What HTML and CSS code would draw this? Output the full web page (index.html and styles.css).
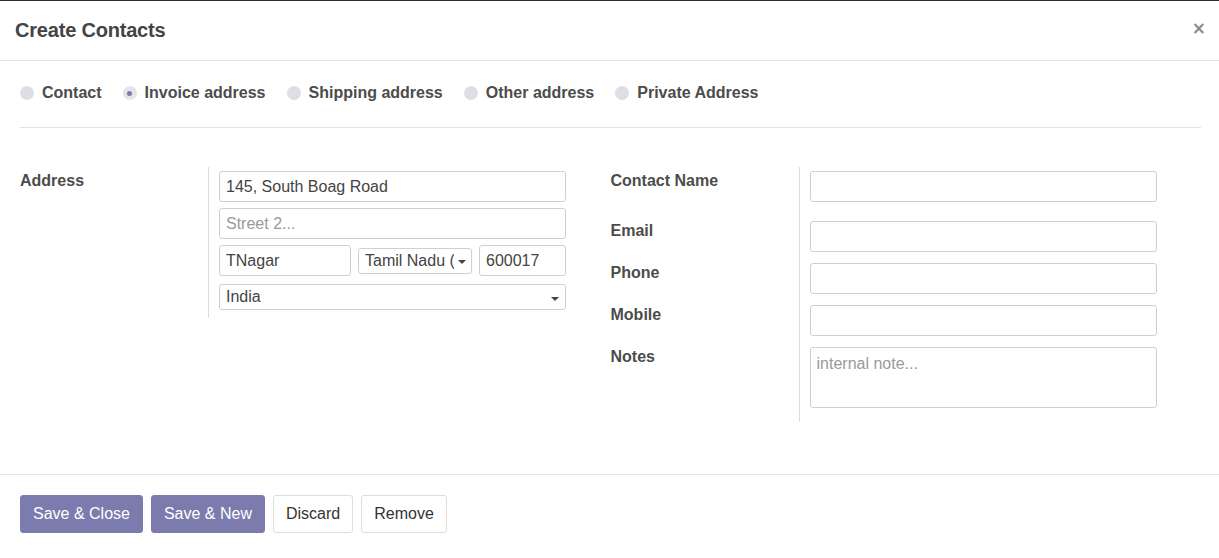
FILE: index.html
```html
<!DOCTYPE html>
<html>
<head>
<meta charset="utf-8">
<title>Create Contacts</title>
<link rel="stylesheet" href="styles.css">
</head>
<body>
<div class="modal">
  <header class="modal-header">
    <h4 class="modal-title">Create Contacts</h4>
    <button class="close" type="button">×</button>
  </header>
  <main class="modal-body">
    <div class="radio-row">
      <label class="radio"><span class="dot"></span><span>Contact</span></label>
      <label class="radio"><span class="dot checked"></span><span>Invoice address</span></label>
      <label class="radio"><span class="dot"></span><span>Shipping address</span></label>
      <label class="radio"><span class="dot"></span><span>Other address</span></label>
      <label class="radio"><span class="dot"></span><span>Private Address</span></label>
    </div>
    <div class="form">
      <div class="group">
        <div class="lbl first">Address</div>
        <div class="fld first last-left">
          <input class="input" type="text" value="145, South Boag Road">
          <input class="input gap" type="text" placeholder="Street 2...">
          <div class="row3 gap">
            <input class="input city" type="text" value="TNagar">
            <div class="select state"><span class="sel-text">Tamil Nadu (IN)</span><span class="caret"></span></div>
            <input class="input zip" type="text" value="600017">
          </div>
          <div class="select country"><span class="sel-text">India</span><span class="caret"></span></div>
        </div>
      </div>
      <div class="group">
        <div class="lbl first">Contact Name</div>
        <div class="fld first r1"><input class="input" type="text"></div>
        <div class="lbl">Email</div>
        <div class="fld r2"><input class="input" type="text"></div>
        <div class="lbl">Phone</div>
        <div class="fld r2"><input class="input" type="text"></div>
        <div class="lbl">Mobile</div>
        <div class="fld r2"><input class="input" type="text"></div>
        <div class="lbl">Notes</div>
        <div class="fld rlast"><textarea class="input notes" placeholder="internal note..."></textarea></div>
      </div>
    </div>
  </main>
  <footer class="modal-footer">
    <button class="btn primary" type="button">Save &amp; Close</button>
    <button class="btn primary" type="button">Save &amp; New</button>
    <button class="btn secondary" type="button">Discard</button>
    <button class="btn secondary" type="button">Remove</button>
  </footer>
</div>
</body>
</html>
```

FILE: styles.css
```css
* { box-sizing: border-box; }
html, body { margin: 0; padding: 0; background: #fff; }
body {
  font-family: "Liberation Sans", Arial, sans-serif;
  font-size: 16px;
  color: #4c4c4c;
}
.modal {
  height: 558px;
  display: flex;
  flex-direction: column;
  border-top: 1px solid #2b2b3a;
}
.modal-header {
  height: 60px;
  border-bottom: 1px solid #e5e5e5;
  display: flex;
  align-items: center;
  justify-content: space-between;
  padding: 0 13px 1px 15px;
}
.modal-title {
  margin: 0;
  font-size: 20px;
  font-weight: bold;
  color: #444;
  letter-spacing: -0.2px;
}
.close {
  border: 0;
  background: none;
  padding: 0;
  font-family: "DejaVu Sans", sans-serif;
  font-size: 17px;
  font-weight: bold;
  color: #8a8a8a;
  line-height: 1;
  margin-top: -4px;
}
.modal-body {
  flex: 1;
  padding: 0 18px 0 20px;
}
.radio-row {
  height: 67px;
  border-bottom: 1px solid #e2e2e2;
  display: flex;
  align-items: center;
  padding-bottom: 2px;
}
.radio {
  display: flex;
  align-items: center;
  font-weight: bold;
  color: #4c4c4c;
  margin-right: 21px;
}
.dot {
  width: 14px;
  height: 14px;
  border-radius: 50%;
  background: #dddfe5;
  margin-right: 8px;
  display: flex;
  align-items: center;
  justify-content: center;
}
.dot.checked { background: #e4e5ec; }
.dot.checked::after {
  content: "";
  width: 5px;
  height: 5px;
  border-radius: 50%;
  background: #7c7bad;
}
.form {
  display: grid;
  grid-template-columns: 1fr 1fr;
  margin-top: 39px;
}
.group {
  display: grid;
  grid-template-columns: 188px 358px;
  align-content: start;
}
.lbl {
  font-weight: bold;
  line-height: 19px;
  color: #4c4c4c;
}
.lbl.first { padding-top: 4px; }
.fld {
  border-left: 1px solid #dcdcdc;
  padding-left: 10px;
}
.fld.first { padding-top: 4px; }
.last-left { padding-bottom: 8px; }
.r1 { padding-bottom: 19px; }
.r2 { padding-bottom: 11px; }
.rlast { padding-bottom: 14px; }
.input {
  display: block;
  width: 347px;
  height: 31px;
  border: 1px solid #cfcfcf;
  border-radius: 3px;
  padding: 0 6px;
  font-family: "Liberation Sans", Arial, sans-serif;
  font-size: 16px;
  color: #444;
  background: #fff;
  outline: none;
}
.input::placeholder { color: #9a9a9a; }
.gap { margin-top: 6px; }
.row3 {
  display: flex;
  align-items: center;
  gap: 7px;
  width: 347px;
}
.row3 .input.city { width: 132px; }
.row3 .input.zip { width: 87px; }
.select {
  display: flex;
  align-items: center;
  height: 26px;
  border: 1px solid #cfcfcf;
  border-radius: 3px;
  padding: 0 5px 0 6px;
  color: #444;
  background: #fff;
}
.sel-text {
  flex: 1;
  overflow: hidden;
  white-space: nowrap;
}
.caret {
  width: 0;
  height: 0;
  border-left: 4px solid transparent;
  border-right: 4px solid transparent;
  border-top: 4px solid #444;
  margin-left: 4px;
  margin-top: 3px;
}
.state { width: 114px; padding-right: 5px; }
.state .sel-text { width: 89px; flex: none; }
.country { width: 347px; margin-top: 8px; padding-right: 6px; }
.notes {
  height: 61px;
  padding: 6px 6px;
  resize: none;
  line-height: 19px;
}
.modal-footer {
  border-top: 1px solid #e5e5e5;
  padding: 20px 20px 25px;
  display: flex;
  gap: 8px;
}
.btn {
  height: 38px;
  padding: 0 12px;
  border-radius: 3px;
  font-family: "Liberation Sans", Arial, sans-serif;
  font-size: 16px;
  line-height: 20px;
}
.primary {
  background: #7c7bad;
  border: 1px solid #7c7bad;
  color: #fff;
}
.secondary {
  background: #fff;
  border: 1px solid #dedede;
  color: #333;
}
```
